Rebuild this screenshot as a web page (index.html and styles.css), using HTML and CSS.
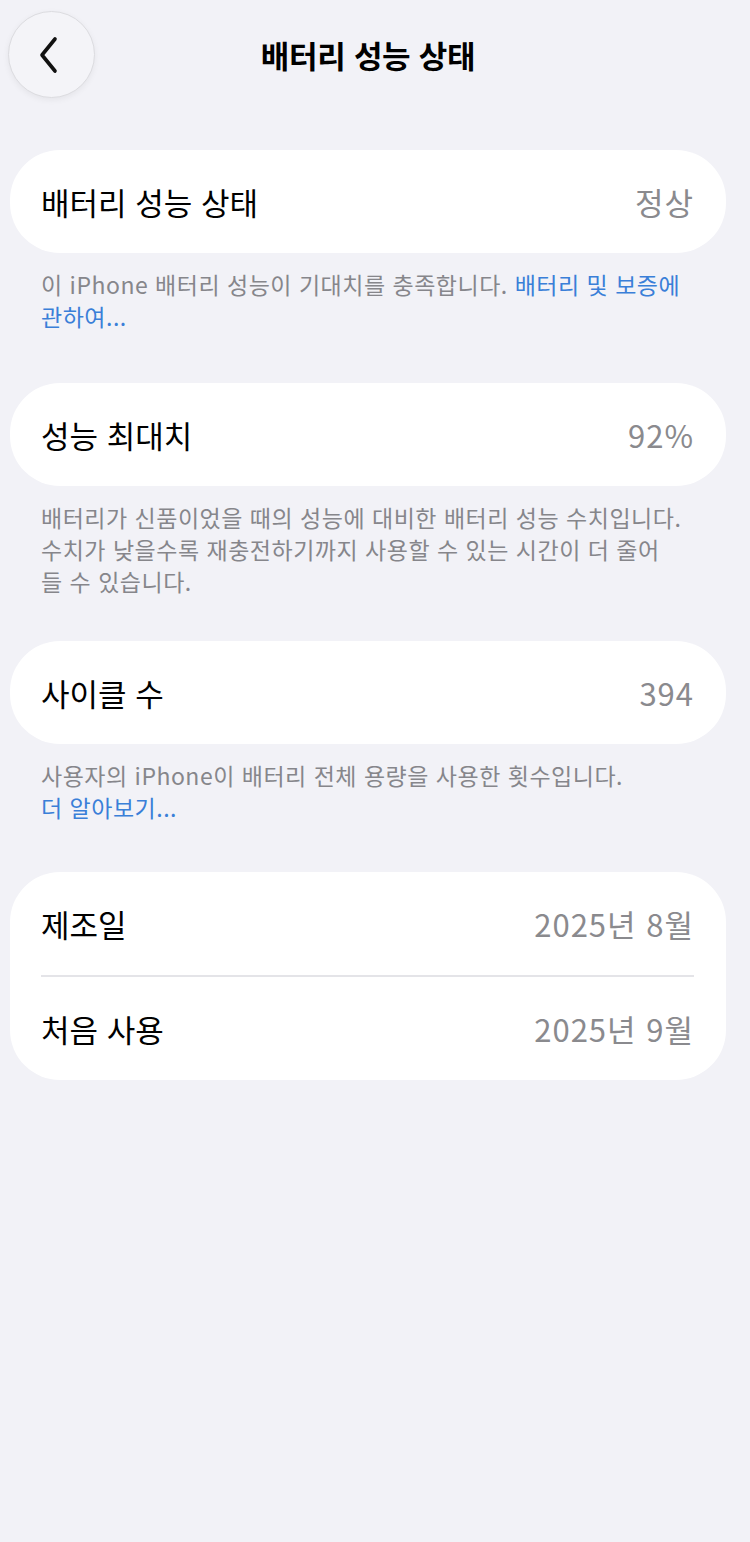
FILE: index.html
```html
<!DOCTYPE html>
<html lang="ko">
<head>
<meta charset="utf-8">
<title>배터리 성능 상태</title>
<link rel="stylesheet" href="styles.css">
</head>
<body>
<div class="page">
  <header class="nav">
    <button class="back" aria-label="뒤로">
      <svg width="22" height="38" viewBox="0 0 22 38"><path d="M17 3 L4 19 L17 35" fill="none" stroke="#111" stroke-width="3.6" stroke-linecap="round" stroke-linejoin="round"/></svg>
    </button>
    <h1 class="title">배터리 성능 상태</h1>
    <div></div>
  </header>

  <section class="group g1">
    <div class="card">
      <div class="row"><span class="label">배터리 성능 상태</span><span class="value">정상</span></div>
    </div>
    <p class="note">이 iPhone 배터리 성능이 기대치를 충족합니다. <a class="link">배터리 및 보증에<br>관하여...</a></p>
  </section>

  <section class="group g2">
    <div class="card">
      <div class="row"><span class="label">성능 최대치</span><span class="value">92%</span></div>
    </div>
    <p class="note">배터리가 신품이었을 때의 성능에 대비한 배터리 성능 수치입니다.<br>수치가 낮을수록 재충전하기까지 사용할 수 있는 시간이 더 줄어<br>들 수 있습니다.</p>
  </section>

  <section class="group g3">
    <div class="card">
      <div class="row"><span class="label">사이클 수</span><span class="value">394</span></div>
    </div>
    <p class="note">사용자의 iPhone이 배터리 전체 용량을 사용한 횟수입니다.<br><a class="link">더 알아보기...</a></p>
  </section>

  <section class="group">
    <div class="card">
      <div class="row"><span class="label">제조일</span><span class="value">2025년 8월</span></div>
      <div class="sep"></div>
      <div class="row"><span class="label">처음 사용</span><span class="value">2025년 9월</span></div>
    </div>
  </section>
</div>
</body>
</html>
```

FILE: styles.css
```css
* { box-sizing: border-box; }
html, body { margin: 0; padding: 0; }
body {
  background: #f2f2f7;
  font-family: "Noto Sans CJK KR", "Noto Sans", sans-serif;
  color: #000;
  height: 1542px;
}
.page {
  width: 720px;
  margin-left: 8px;
}
.nav {
  display: grid;
  grid-template-columns: 88px 1fr 88px;
  align-items: center;
  padding-top: 11px;
  height: 150px;
  align-content: start;
}
.back {
  width: 87px;
  height: 87px;
  border-radius: 50%;
  border: 1px solid #dcdce0;
  background: #f4f4f8;
  box-shadow: 0 2px 6px rgba(0,0,0,0.06);
  display: flex;
  align-items: center;
  justify-content: center;
  padding: 0 6px 0 0;
}
.title {
  margin: 0;
  text-align: center;
  font-size: 31px;
  font-weight: 700;
  letter-spacing: -0.3px;
}
.group {
  margin-left: 2px;
  width: 716px;
  margin-bottom: 48px;
}
.group.g1 { margin-bottom: 51px; }
.group.g2 { margin-bottom: 44px; }
.group.g3 { margin-bottom: 49px; }
.card {
  background: #fff;
  border-radius: 50px;
  padding: 0 32px 0 31px;
}
.row {
  height: 103px;
  display: flex;
  align-items: center;
  justify-content: space-between;
  font-size: 31px;
}
.value { color: #8a8a8e; letter-spacing: 1px; }
.sep {
  height: 2px;
  background: #e4e4e8;
}
.note {
  margin: 0;
  padding: 15px 0 0 31px;
  font-size: 23px;
  letter-spacing: 0.5px;
  line-height: 32px;
  color: #86868b;
  white-space: nowrap;
}
.link { color: #3a7fd8; }
```
